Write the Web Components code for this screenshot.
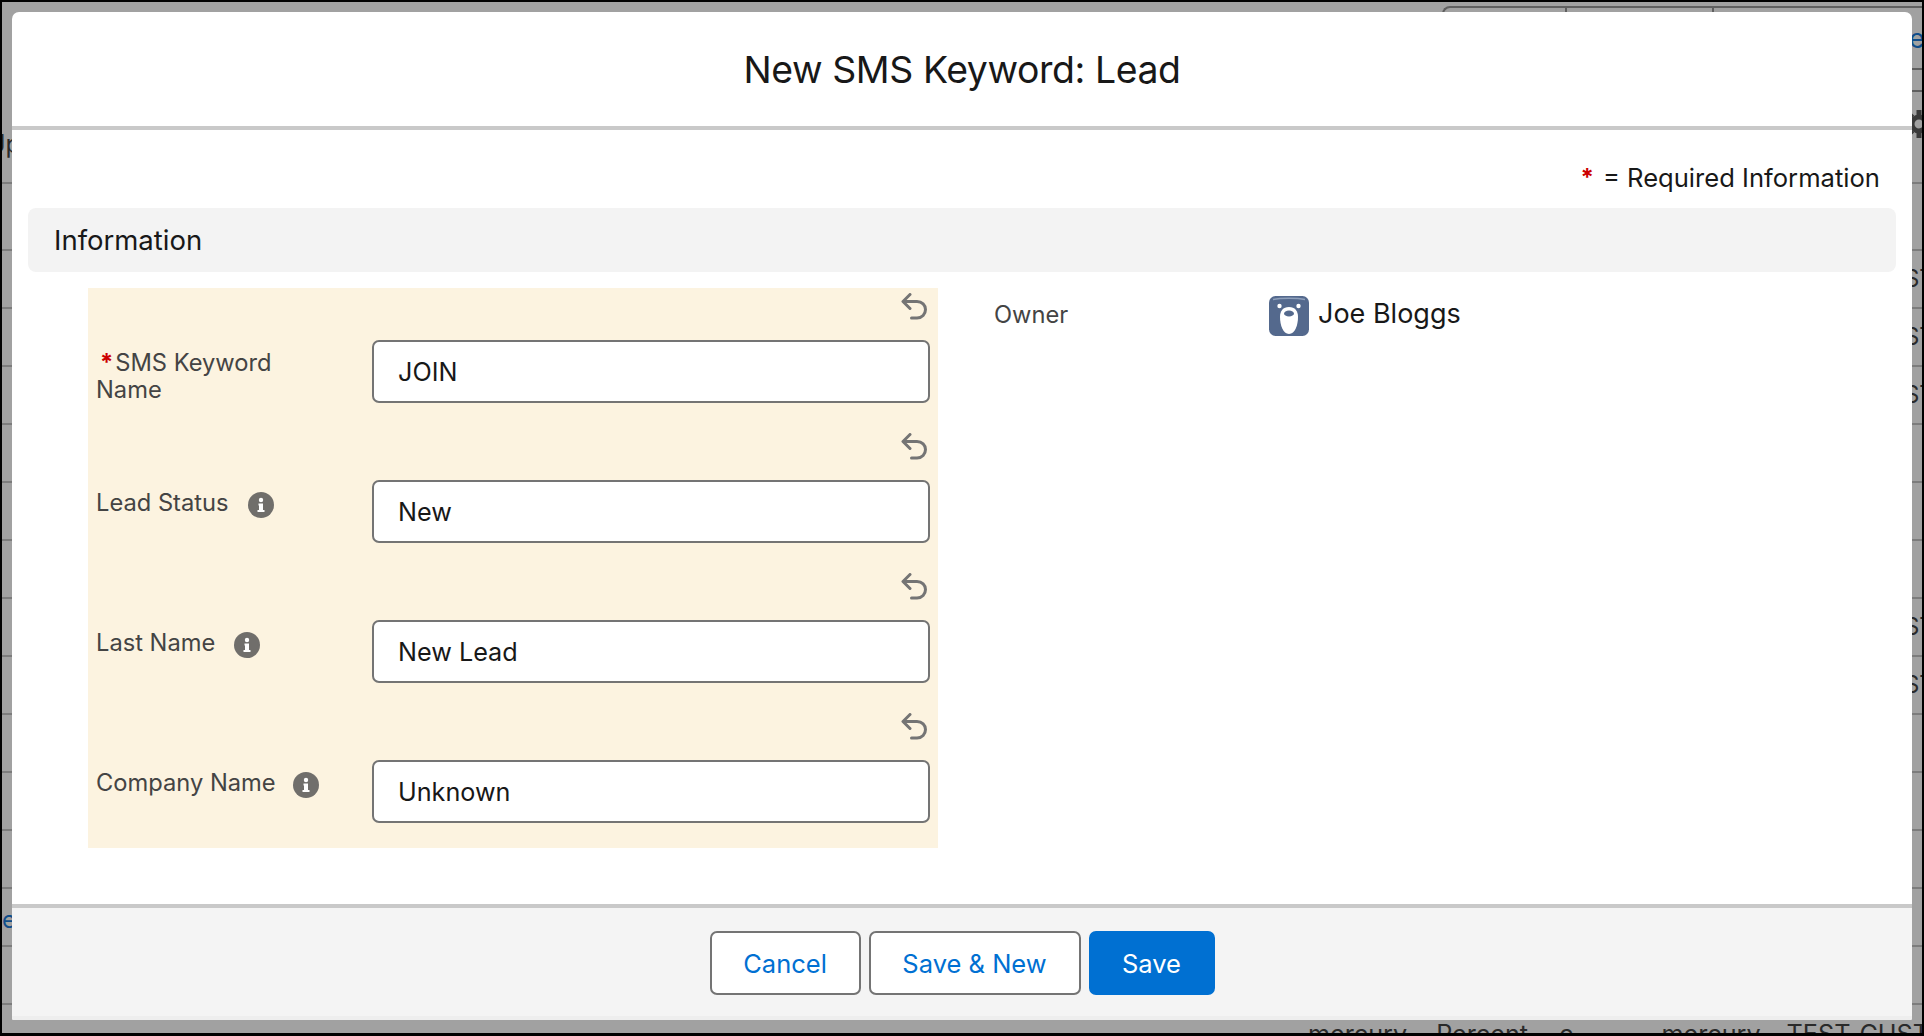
<!DOCTYPE html>
<html lang="en">
<head>
<meta charset="utf-8">
<title>New SMS Keyword: Lead</title>
<style>
html,body{margin:0;padding:0;background:#000}
body{font-family:Inter,"Liberation Sans",sans-serif;color:#181818}
</style>
</head>
<body>
<sf-page>
  <sf-backdrop></sf-backdrop>
  <sf-modal heading="New SMS Keyword: Lead">
    <sf-section heading="Information">
      <sf-panel slot="left">
        <sf-field value="JOIN" required>SMS Keyword<br>Name</sf-field>
        <sf-field value="New" info>Lead Status</sf-field>
        <sf-field value="New Lead" info>Last Name</sf-field>
        <sf-field value="Unknown" info gap="17">Company Name</sf-field>
      </sf-panel>
      <sf-owner slot="right" name="Joe Bloggs"></sf-owner>
    </sf-section>
    <sf-button slot="footer" style="width:151px">Cancel</sf-button>
    <sf-button slot="footer" style="width:212px">Save &amp; New</sf-button>
    <sf-button slot="footer" primary style="width:126px">Save</sf-button>
  </sf-modal>
</sf-page>
<script>
const shadow=(el,html)=>{el.attachShadow({mode:'open'}).innerHTML=html};
const FONT='Inter,"Liberation Sans",sans-serif';

customElements.define('sf-page',class extends HTMLElement{
  connectedCallback(){shadow(this,`<style>
    :host{display:block;position:relative;box-sizing:border-box;width:1924px;height:1036px;overflow:hidden;
      border:2px solid #000;border-bottom-width:3px;background:#a1a1a1;font-family:${FONT}}
  </style><slot></slot>`)}
});

customElements.define('sf-backdrop',class extends HTMLElement{
  connectedCallback(){
    const st=`<span class="st">TEST</span>`;
    let rows='';
    [st,st,st,'','','',st,st,'','','',`<span class="e">e</span>`,''].forEach(c=>{
      rows+=`<div class="row">${c}</div>`;
    });
    shadow(this,`<style>
      :host{display:block;font-size:24px;color:#2a2a2a;line-height:30px}
      .tabs{box-sizing:border-box;height:62px;margin-left:1440px;margin-top:4px;border-top:2px solid #5f5f5f;border-left:2px solid #5f5f5f;border-top-left-radius:8px;display:flex}
      .tabs i{display:block;flex:none;border-right:2px solid #5f5f5f;height:6px}
      .er{flex:none;margin-left:195px;color:#0f4d8a;margin-top:16px;line-height:30px;font-size:27px}
      .lines{box-sizing:border-box;height:24px;margin-left:1880px;border-top:2px solid #5f5f5f;border-bottom:2px solid #5f5f5f}
      .top2{box-sizing:border-box;height:92px;border-bottom:2px solid #7c7c7c;display:flex;align-items:flex-start;justify-content:space-between}
      .up{margin:37px 0 0 -15px;font-size:25px}
      .gear{margin:17px -12px 0 0;width:30px;height:30px;flex:none}
      .spacer{height:67px;box-sizing:border-box;border-bottom:2px solid #7c7c7c}
      .row{box-sizing:border-box;height:58px;border-bottom:2px solid #7c7c7c;display:flex;align-items:center}
      .st{margin-left:1872px;white-space:nowrap}
      .e{color:#0f4d8a;font-size:24px;margin-top:6px}
      .foot{display:flex;height:58px;align-items:center;white-space:nowrap;font-size:25.200px}
      .foot span{flex:none}
    </style>
    <div class="tabs"><i style="width:121px"></i><i style="width:145px"></i><span class="er">er</span></div>
    <div class="lines"></div>
    <div class="top2"><span class="up">Up</span>
      <svg class="gear" viewBox="0 0 30 30" aria-hidden="true"><g fill="none" stroke="#3a3a3a"><circle cx="15" cy="15" r="7" stroke-width="5"/><path stroke-width="5" d="M15 1v5M15 24v5M1 15h5M24 15h5M5 5l3.500 3.500M21.500 21.500L25 25M25 5l-3.500 3.500M8.500 21.500L5 25"/></g></svg></div>
    <div class="spacer"></div>
    ${rows}
    <div class="foot"><span style="margin-left:1306px">mercury</span><span style="margin-left:29px">Percent</span><span style="margin-left:31px">c</span><span style="margin-left:88px">mercury</span><span style="margin-left:26px">TEST_CUST</span></div>`);
  }
});

customElements.define('sf-modal',class extends HTMLElement{
  connectedCallback(){shadow(this,`<style>
    :host{position:absolute;left:10px;top:10px;width:1900px;height:1008px;display:flex;flex-direction:column;
      background:#fff;border-radius:7px 7px 2px 2px;overflow:hidden}
    header{flex:none;height:114px;border-bottom:4px solid #c9c9c9;display:flex;align-items:center;justify-content:center}
    h1{margin:0;font-size:37.400px;font-weight:400;color:#181818;letter-spacing:-.4px}
    main{flex:1;min-height:0}
    footer{flex:none;box-sizing:border-box;height:116px;background:#f4f4f4;border-top:4px solid #c9c9c9;border-bottom:4px solid #eee;
      display:flex;justify-content:center;align-items:center;gap:8px;padding-top:2px}
  </style>
  <header><h1>${this.getAttribute('heading')}</h1></header>
  <main><slot></slot></main>
  <footer><slot name="footer"></slot></footer>`)}
});

customElements.define('sf-section',class extends HTMLElement{
  connectedCallback(){shadow(this,`<style>
    :host{display:block}
    .req{height:78px;box-sizing:border-box;padding:33px 32px 0 0;display:flex;justify-content:flex-end;align-items:flex-start;font-size:25.600px;line-height:30px;color:#181818}
    .req b{color:#c00;font-weight:700;font-size:24px;margin-right:9px}
    .bar{height:64px;margin:0 16px;background:#f3f3f3;border-radius:8px;display:flex;align-items:center;padding-left:26px;font-size:27.500px;color:#181818}
    .cols{display:flex;margin:16px 0 0 76px}
  </style>
  <div class="req"><b>*</b><span>= Required Information</span></div>
  <div class="bar">${this.getAttribute('heading')}</div>
  <div class="cols"><slot name="left"></slot><slot name="right"></slot></div>`)}
});

customElements.define('sf-panel',class extends HTMLElement{
  connectedCallback(){shadow(this,`<style>
    :host{display:block;box-sizing:border-box;width:850px;height:560px;background:#fcf3e0;padding:0 8px 0 8px}
  </style><slot></slot>`)}
});

const UNDO=`<svg class="undo" width="27" height="28" viewBox="0 0 27 28" aria-hidden="true"><path d="M9 1.500L2 8.500l7 7M2.500 8.500H16c5 0 8.500 3.500 8.500 8s-3.500 8.500-8.500 8.500h-5.500" fill="none" stroke="#747474" stroke-width="3" stroke-linecap="round" stroke-linejoin="round"/></svg>`;
const INFO=`<svg class="info" width="26" height="26" viewBox="0 0 26 26" aria-hidden="true"><circle cx="13" cy="13" r="13" fill="#706e6b"/><circle cx="13" cy="8" r="2.200" fill="#fff"/><path d="M10.500 11.500H15v6.500h1.500v2h-7v-2H11v-4.500h-.5z" fill="#fff"/></svg>`;

customElements.define('sf-field',class extends HTMLElement{
  connectedCallback(){
    const gap=this.getAttribute('gap')||19;
    shadow(this,`<style>
      :host{display:block;height:140px;box-sizing:border-box;font-size:23.700px;color:#444}
      .top{height:52px;display:flex;justify-content:flex-end;padding:5px 2px 0 0;box-sizing:border-box}
      .grid{display:grid;grid-template-columns:276px 558px}
      .lab{padding-top:9px;line-height:27px}
      .req{color:#c00;font-weight:700;margin:0 2px 0 4px}
      .info{vertical-align:-7px;margin-left:${gap}px}
      .inp{box-sizing:border-box;height:63px;border:2px solid #747474;border-radius:7px;background:#fff;display:flex;align-items:center;padding:1px 0 0 24px;font-size:25.200px;color:#181818}
    </style>
    <div class="top">${UNDO}</div>
    <div class="grid">
      <div class="lab">${this.hasAttribute('required')?'<span class="req">*</span>':''}<slot></slot>${this.hasAttribute('info')?INFO:''}</div>
      <div class="inp">${this.getAttribute('value')}</div>
    </div>`);
  }
});

customElements.define('sf-owner',class extends HTMLElement{
  connectedCallback(){shadow(this,`<style>
    :host{display:grid;grid-template-columns:275px auto;margin-left:56px;height:60px;padding-top:8px;align-items:start;box-sizing:border-box}
    .lab{font-size:23.700px;color:#444;line-height:38px}
    .val{display:flex;gap:9px;align-items:flex-start;font-size:27px;color:#181818;line-height:35px}
    svg{display:block;flex:none}
  </style>
  <div class="lab">Owner</div>
  <div class="val"><svg width="40" height="40" viewBox="0 0 40 40" aria-hidden="true">
    <rect width="40" height="40" rx="6.500" fill="#54698d"/>
    <path d="M4 3.500c8-1.600 24-1.600 32 0" fill="none" stroke="#8fa0bb" stroke-width="1.500"/>
    <circle cx="10.500" cy="10" r="2.200" fill="#fff"/><circle cx="29.500" cy="10" r="2.200" fill="#fff"/>
    <path d="M20 11c6 0 9 4 9 10 0 8-3 17-9 17s-9-9-9-17c0-6 3-10 9-10z" fill="#fff"/>
    <ellipse cx="20" cy="17.500" rx="5" ry="3" fill="#54698d"/></svg><span>${this.getAttribute('name')}</span></div>`)}
});

customElements.define('sf-button',class extends HTMLElement{
  connectedCallback(){
    const p=this.hasAttribute('primary');
    shadow(this,`<style>
      :host{display:flex;box-sizing:border-box;height:64px;align-items:center;justify-content:center;border-radius:7px;
        font-size:25.500px;background:${p?'#0070d2':'#fff'};color:${p?'#fff':'#0070d2'};
        border:2px solid ${p?'#0070d2':'#747474'}}
    </style><slot></slot>`);
  }
});
</script>
</body>
</html>
